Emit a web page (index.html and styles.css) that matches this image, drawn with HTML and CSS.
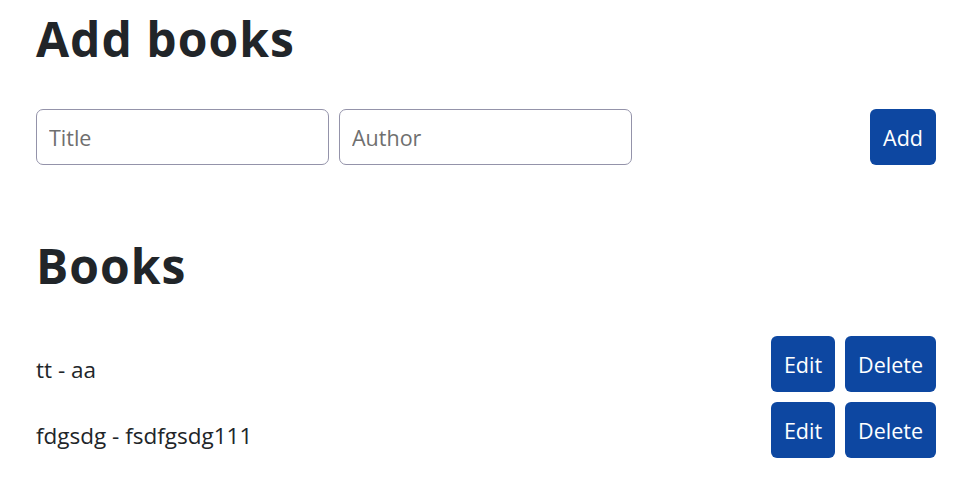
FILE: index.html
```html
<!DOCTYPE html>
<html lang="en">
<head>
<meta charset="utf-8">
<title>Books</title>
<link rel="stylesheet" href="styles.css">
</head>
<body>
<main class="container">
  <h1 class="heading heading-add">Add books</h1>
  <form class="add-form">
    <input class="field" type="text" placeholder="Title">
    <input class="field" type="text" placeholder="Author">
    <button class="btn btn-push" type="button">Add</button>
  </form>
  <h1 class="heading heading-books">Books</h1>
  <ul class="book-list">
    <li class="book">
      <span class="book-text">tt - aa</span>
      <div class="actions">
        <button class="btn" type="button">Edit</button>
        <button class="btn" type="button">Delete</button>
      </div>
    </li>
    <li class="book">
      <span class="book-text">fdgsdg - fsdfgsdg111</span>
      <div class="actions">
        <button class="btn" type="button">Edit</button>
        <button class="btn" type="button">Delete</button>
      </div>
    </li>
  </ul>
</main>
</body>
</html>
```

FILE: styles.css
```css
* { box-sizing: border-box; }
html, body { margin: 0; padding: 0; background: #ffffff; }
body {
  font-family: "Open Sans", "Noto Sans", sans-serif;
  color: #212529;
  font-size: 22.5px;
}
.container {
  padding: 10px 35px 0 36px;
}
.heading {
  margin: 0;
  font-size: 48px;
  line-height: 57px;
  font-weight: 700;
  letter-spacing: 1px;
}
.add-form {
  display: flex;
  align-items: center;
  gap: 10px;
  margin: 42px 0 72px;
}
.field {
  width: 293px;
  height: 56px;
  border: 1px solid #9493aa;
  border-radius: 7px;
  padding: 0 12px;
  font-family: inherit;
  font-size: 21.5px;
  color: #212529;
  background: #fff;
  outline: none;
}
.field::placeholder { color: #6f6f6f; }
.btn {
  height: 56px;
  padding: 0 13px;
  border: none;
  border-radius: 6px;
  background: #0d47a1;
  color: #ffffff;
  font-family: inherit;
  font-size: 21.5px;
  cursor: pointer;
}
.btn-push { margin-left: auto; }
.book-list {
  list-style: none;
  margin: 42px 0 0;
  padding: 0;
  display: flex;
  flex-direction: column;
  gap: 10px;
}
.book {
  display: flex;
  align-items: center;
  justify-content: space-between;
}
.book-text { padding-top: 10px; }
.actions {
  display: flex;
  gap: 10px;
}
```
